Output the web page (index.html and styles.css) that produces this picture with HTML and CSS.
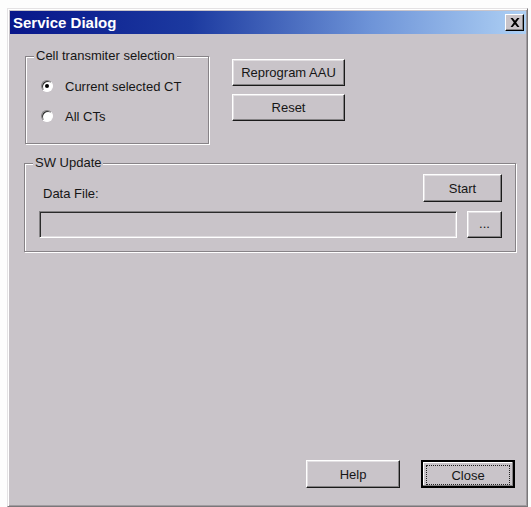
FILE: index.html
```html
<!DOCTYPE html>
<html lang="en">
<head>
    <meta charset="UTF-8">
    <title>Service Dialog</title>
    <link rel="stylesheet" href="styles.css">
</head>
<body>
    <div class="window">
        <!-- Title bar -->
        <div class="titlebar">
            <span class="title">Service Dialog</span>
            <button class="close-x" aria-label="Close">
                <svg width="10" height="9" viewBox="0 0 10 9">
                    <path d="M0.5 0h2.2l2.3 2.8L7.3 0h2.2L6.2 4.5 9.5 9H7.3L5 6.2 2.7 9H0.5l3.3-4.5z" fill="#000"/>
                </svg>
            </button>
        </div>

        <div class="content">
            <div class="top-row">
                <!-- Cell transmitter selection -->
                <fieldset class="group group-ct">
                    <legend>Cell transmiter selection</legend>
                    <label class="radio"><span class="radio-dot checked"></span>Current selected CT</label>
                    <label class="radio"><span class="radio-dot"></span>All CTs</label>
                </fieldset>
                <div class="btn-col">
                    <button class="btn btn-wide">Reprogram AAU</button>
                    <button class="btn btn-wide">Reset</button>
                </div>
            </div>

            <!-- SW Update -->
            <fieldset class="group group-sw">
                <legend>SW Update</legend>
                <div class="sw-row">
                    <span class="data-label">Data File:</span>
                    <button class="btn btn-start">Start</button>
                </div>
                <div class="sw-row file-row">
                    <div class="file-field"></div>
                    <button class="btn btn-browse">...</button>
                </div>
            </fieldset>

            <div class="footer">
                <button class="btn btn-foot">Help</button>
                <button class="btn btn-foot btn-default"><span class="focus">Close</span></button>
            </div>
        </div>
    </div>
</body>
</html>
```

FILE: styles.css
```css
/* General */
body {
    margin: 0;
    background: #fdfdfd;
    font-family: "Liberation Sans", Arial, sans-serif;
    font-size: 13px;
    color: #161616;
}

/* Window frame */
.window {
    width: 521px;
    height: 499px;
    margin: 8px 0 0 7px;
    box-sizing: border-box;
    background: #c9c4c9;
    border: 1px solid;
    border-color: #e4e2e4 #7a777a #7a777a #e4e2e4;
    box-shadow: inset 1px 1px 0 #fff, inset -1px -1px 0 #a09ca0;
    padding: 2px 1px 1px 2px;
    display: flex;
    flex-direction: column;
}

/* Title bar */
.titlebar {
    height: 23px;
    flex-shrink: 0;
    background: linear-gradient(90deg, #08168a 0%, #1c3aa0 35%, #6e94d8 70%, #aed0f4 100%);
    display: flex;
    align-items: center;
    justify-content: space-between;
    padding: 0 2px 0 3px;
}
.title {
    color: #fff;
    font-weight: bold;
    font-size: 15px;
}
.close-x {
    width: 19px;
    height: 17px;
    padding: 0;
    background: #c9c4c9;
    border: 1px solid;
    border-color: #fff #000 #000 #fff;
    box-shadow: inset -1px -1px 0 #848284;
    display: flex;
    align-items: center;
    justify-content: center;
}

/* Content */
.content {
    flex: 1;
    display: flex;
    flex-direction: column;
    padding: 15px 11px 17px 15px;
}
.top-row {
    display: flex;
    gap: 23px;
}

/* Group boxes */
.group {
    margin: 0;
    box-sizing: border-box;
    border: 1px solid #878387;
    box-shadow: inset 1px 1px 0 #fff, 1px 1px 0 #fff;
}
.group legend {
    padding: 0 2px;
    line-height: 14px;
    background: #c9c4c9;
}
.group-ct {
    width: 184px;
    height: 95px;
    padding: 13px 0 0 15px;
    display: flex;
    flex-direction: column;
    gap: 10px;
}
.group-ct legend {
    margin-left: -7px;
}
.radio {
    display: flex;
    align-items: center;
    gap: 12px;
    height: 20px;
}
.radio-dot {
    width: 12px;
    height: 12px;
    box-sizing: border-box;
    border-radius: 50%;
    border: 1px solid;
    border-color: #848284 #fff #fff #848284;
    background: #fff;
    box-shadow: inset 1px 1px 0 #303030;
    position: relative;
}
.radio-dot.checked::after {
    content: "";
    position: absolute;
    left: 3px;
    top: 3px;
    width: 4px;
    height: 4px;
    border-radius: 50%;
    background: #000;
}

/* Buttons */
.btn {
    font-family: inherit;
    font-size: 13px;
    color: #161616;
    background: #c9c4c9;
    border: 1px solid;
    border-color: #fff #1a1a1a #1a1a1a #fff;
    box-shadow: inset -1px -1px 0 #848284, inset 1px 1px 0 #e2dfe2;
    padding: 0;
    box-sizing: border-box;
}
.btn-col {
    display: flex;
    flex-direction: column;
    gap: 8px;
    padding-top: 10px;
}
.btn-wide {
    width: 113px;
    height: 27px;
}

/* SW Update */
.group-sw {
    width: 492px;
    height: 96px;
    margin-top: 12px;
    margin-left: -1px;
    padding: 4px 13px 0 14px;
    display: flex;
    flex-direction: column;
    gap: 9px;
}
.group-sw legend {
    margin-left: -6px;
}
.sw-row {
    display: flex;
    justify-content: space-between;
}
.data-label {
    align-self: flex-end;
    margin: 0 0 1px 4px;
}
.btn-start {
    width: 79px;
    height: 28px;
}
.file-field {
    width: 418px;
    height: 27px;
    box-sizing: border-box;
    border: 1px solid;
    border-color: #848284 #fff #fff #848284;
    box-shadow: inset 1px 1px 0 #2a2a2a, inset -1px -1px 0 #dfdcdf;
}
.btn-browse {
    width: 35px;
    height: 27px;
    padding-bottom: 3px;
}

/* Footer */
.footer {
    margin-top: auto;
    display: flex;
    justify-content: flex-end;
    gap: 21px;
}
.btn-foot {
    width: 94px;
    height: 28px;
}
.btn-default {
    border: 2px solid #000;
    box-shadow: inset -1px -1px 0 #848284, inset 1px 1px 0 #fff;
    padding: 3px;
}
.focus {
    display: flex;
    align-items: center;
    justify-content: center;
    height: 100%;
    border: 1px dotted #222;
}
```
